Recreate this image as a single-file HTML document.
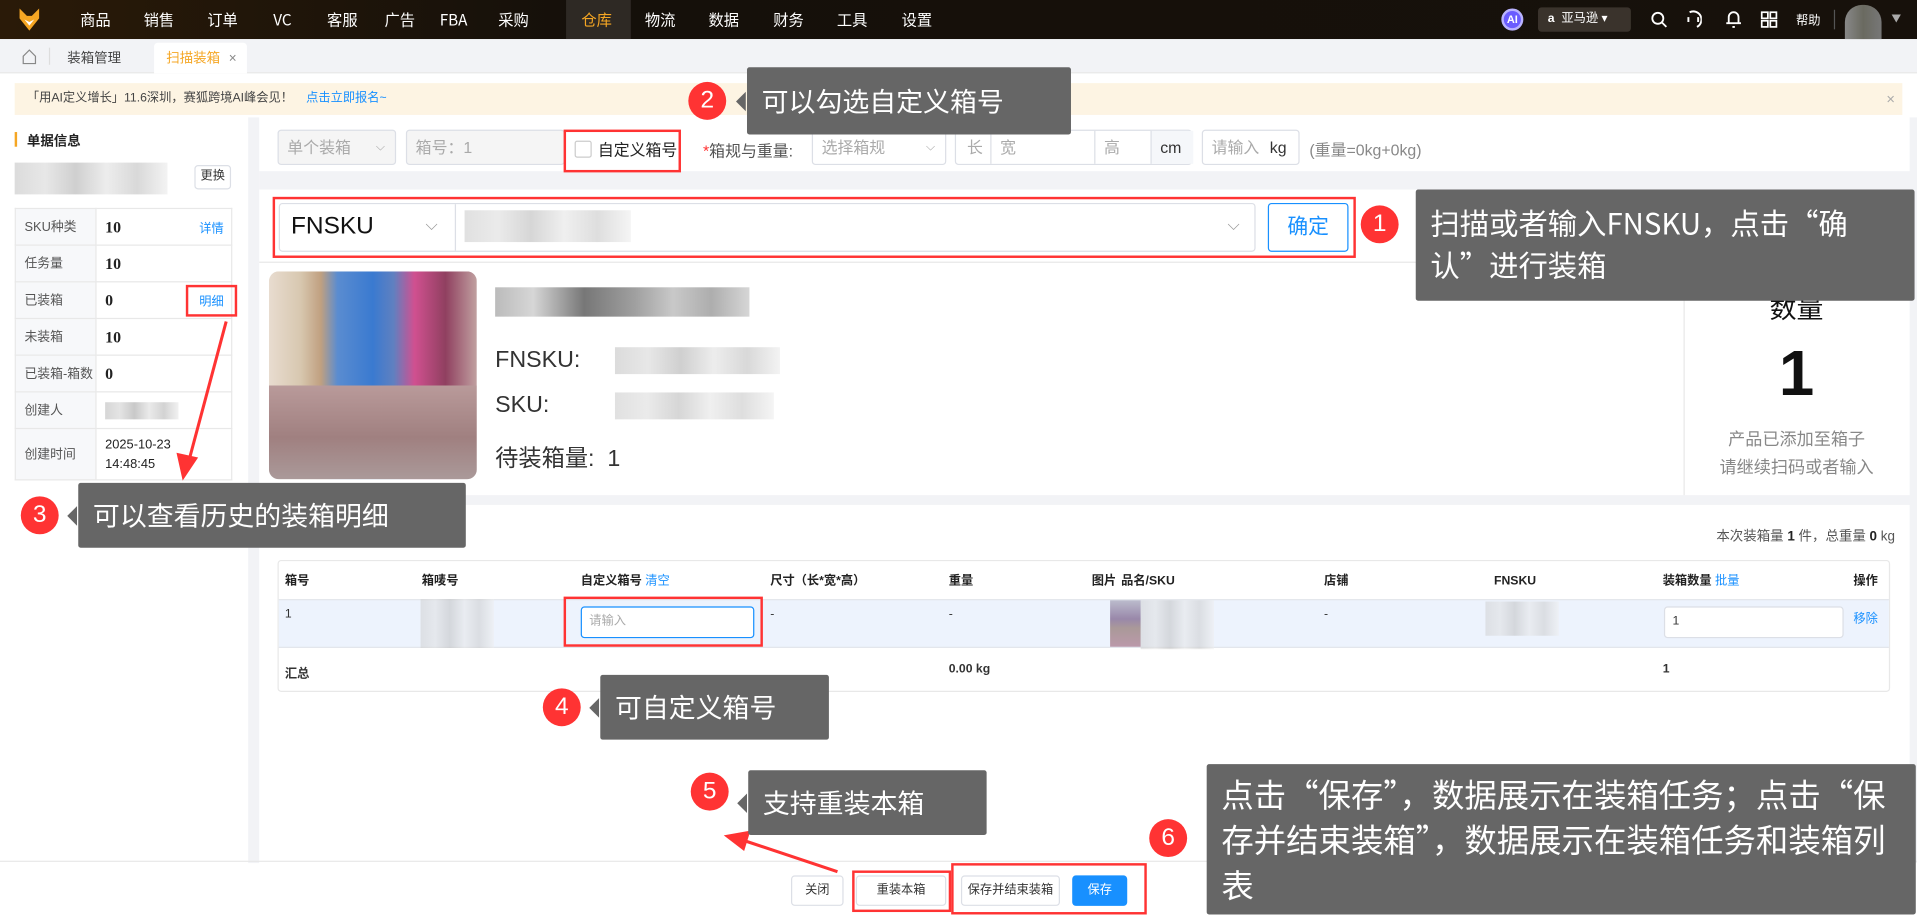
<!DOCTYPE html>
<html><head><meta charset="utf-8">
<style>
*{box-sizing:border-box;margin:0;padding:0}
html,body{width:1917px;height:917px;overflow:hidden;background:#fff}
body{font-family:"Liberation Sans","Noto Sans CJK SC",sans-serif;color:#333}
#w{position:absolute;left:0;top:0;width:1568px;height:750px;transform:scale(1.22258);transform-origin:0 0;background:#fff}
.a{position:absolute}
.nav{left:0;top:0;width:1568px;height:32px;background:linear-gradient(90deg,#2a1a08,#15100a 30%,#17110b 100%)}
.nav span{position:absolute;top:0;line-height:32px;height:32px;color:#fff;font-size:12.5px;transform:translateX(-50%);font-family:"Noto Sans CJK SC",sans-serif}
.tabs{left:0;top:32px;width:1568px;height:28px;background:#f2f3f6;border-bottom:1px solid #e8e8e8}
.box{border:1px solid #dcdfe6;border-radius:3px;background:#fff}
.dis{background:#f5f5f5;color:#aaa}
.red{border:2px solid #f33}
.tip{background:#666;color:#fff;font-size:22px;border-radius:2px;padding:0 12px;line-height:31px;font-family:"Noto Sans CJK SC",sans-serif}
.tip:before{content:"";position:absolute;left:-9px;top:50%;margin-top:-8px;border:8px solid transparent;border-right-color:#666;border-left:0;width:0;height:0}
.num{width:31px;height:31px;border-radius:50%;background:#f33;color:#fff;font-size:20px;text-align:center;line-height:31px}
.blur{background:linear-gradient(90deg,#ccc,#ddd 20%,#bbb 40%,#e5e5e5 60%,#c8c8c8 80%,#eee)}
.lt{table-layout:fixed}
.lt td{border:1px solid #e8e8e8;height:30px;font-size:10.5px;padding:0 0 0 7px;white-space:nowrap;overflow:hidden}
.lt td.l{background:#f7f8fa;color:#555}
.lt td.b{font-weight:bold;font-size:13px;color:#222;font-family:"Liberation Serif",serif}
.th{font-size:10px;font-weight:bold;color:#222;top:468px;line-height:16px}
.btn{position:absolute;border:1px solid #dcdfe6;border-radius:3px;background:#fff;font-size:10px;text-align:center;line-height:23px;height:25px;color:#333}
</style></head><body><div id="w">
<div class="a nav">
 <svg class="a" style="left:14px;top:6px" width="20" height="20" viewBox="0 0 20 20"><path d="M2 1 L8 7 L12 7 L18 1 L18 9 L10 19 L2 9Z" fill="#f5a623"/><path d="M6 10 L10 15 L14 10 L10 12Z" fill="#fff"/></svg>
 <div class="a" style="left:463px;top:0;width:53px;height:32px;background:#2e2924"></div>
 <span style="left:78px">商品</span><span style="left:130px">销售</span><span style="left:182px">订单</span><span style="left:231px">VC</span><span style="left:280px">客服</span><span style="left:327px">广告</span><span style="left:371px">FBA</span><span style="left:420px">采购</span><span style="left:488px;color:#f5a623">仓库</span><span style="left:540px">物流</span><span style="left:592px">数据</span><span style="left:645px">财务</span><span style="left:697px">工具</span><span style="left:750px">设置</span>
 <div class="a" style="left:1228px;top:7px;width:18px;height:18px;border-radius:50%;background:#6a5cff;border:2px solid #b9b3ff;color:#fff;font-size:9px;font-weight:bold;text-align:center;line-height:14px">AI</div>
 <div class="a" style="left:1258px;top:6px;width:76px;height:20px;border-radius:3px;background:#3a332c;color:#fff;font-size:10px;line-height:20px;padding-left:8px"><b>a</b>&nbsp; 亚马逊 ▾</div>
 <svg class="a" style="left:1350px;top:9px" width="14" height="14"><circle cx="6" cy="6" r="4.5" stroke="#fff" stroke-width="1.5" fill="none"/><path d="M9.5 9.5L13 13" stroke="#fff" stroke-width="1.5"/></svg>
 <svg class="a" style="left:1378px;top:8px" width="14" height="16"><path d="M4 2 A6 6 0 0 1 10 14 M3 6 v4 M11 6 v4" stroke="#fff" stroke-width="1.6" fill="none"/></svg>
 <svg class="a" style="left:1411px;top:8px" width="14" height="16"><path d="M3 11 V6 A4 4 0 0 1 11 6 V11 H3Z M1 11 H13 M6 14 H8" stroke="#fff" stroke-width="1.5" fill="none"/></svg>
 <svg class="a" style="left:1440px;top:9px" width="14" height="14"><rect x="1" y="1" width="5" height="5" stroke="#fff" fill="none" stroke-width="1.4"/><rect x="8" y="1" width="5" height="5" stroke="#fff" fill="none" stroke-width="1.4"/><rect x="1" y="8" width="5" height="5" stroke="#fff" fill="none" stroke-width="1.4"/><rect x="8" y="8" width="5" height="5" stroke="#fff" fill="none" stroke-width="1.4"/></svg>
 <span style="left:1479px;font-size:10px">帮助</span>
 <div class="a" style="left:1500px;top:8px;width:1px;height:16px;background:#555"></div>
 <div class="a" style="left:1509px;top:4px;width:30px;height:36px;border-radius:14px 14px 0 0;background:linear-gradient(90deg,#888,#6a6a60 50%,#777)"></div>
 <span style="left:1551px;font-size:8px;color:#aaa">▼</span>
</div>
<div class="a tabs">
 <svg class="a" style="left:18px;top:8px" width="12" height="13"><path d="M1 6 L6 1 L11 6 V12 H1Z" stroke="#888" fill="none"/></svg>
 <div class="a" style="left:40px;top:7px;width:1px;height:14px;background:#ddd"></div>
 <div class="a" style="left:55px;top:7px;font-size:11px;color:#444">装箱管理</div>
 <div class="a" style="left:126px;top:3px;width:76px;height:25px;background:#fff;border-radius:3px 3px 0 0;font-size:11px;color:#f5a623;padding:4px 0 0 10px">扫描装箱 <span style="color:#888;margin-left:4px">×</span></div>
</div>
<div class="a" style="left:12px;top:68px;width:1544px;height:26px;background:#fdf4e3;font-size:10px;line-height:26px;padding-left:10px;color:#444">「用AI定义增长」11.6深圳，赛狐跨境AI峰会见！ <span style="color:#1890ff;margin-left:8px">点击立即报名~</span><span style="position:absolute;right:6px;color:#aaa;font-size:12px">×</span></div>
<div class="a" style="left:203px;top:96px;width:9px;height:610px;background:#f2f3f6"></div>
<div class="a" style="left:212px;top:140px;width:1356px;height:15px;background:#f2f3f6"></div>
<div class="a" style="left:212px;top:405px;width:1356px;height:8px;background:#f2f3f6"></div>
<div class="a" style="left:1562px;top:96px;width:6px;height:610px;background:#f2f3f6"></div>
<!-- left panel -->
<div class="a" style="left:12px;top:108px;width:2px;height:12px;background:#f5a623"></div>
<div class="a" style="left:22px;top:107px;font-size:11px;font-weight:bold;color:#222">单据信息</div>
<div class="a blur" style="left:12px;top:133px;width:125px;height:26px;opacity:.7"></div>
<div class="btn" style="left:159px;top:135px;width:30px;height:20px;line-height:18px">更换</div>
<table class="a lt" style="left:12px;top:170px;width:178px;border-collapse:collapse">
<colgroup><col style="width:66px"><col></colgroup>
<tr><td class="l">SKU种类</td><td class="b">10 <span style="float:right;margin-right:6px;color:#1890ff;font-weight:normal;font-size:10px;font-family:'Noto Sans CJK SC',sans-serif">详情</span></td></tr>
<tr><td class="l">任务量</td><td class="b">10</td></tr>
<tr><td class="l">已装箱</td><td class="b">0 <span style="float:right;margin-right:6px;color:#1890ff;font-weight:normal;font-size:10px;font-family:'Noto Sans CJK SC',sans-serif">明细</span></td></tr>
<tr><td class="l">未装箱</td><td class="b">10</td></tr>
<tr><td class="l">已装箱-箱数</td><td class="b">0</td></tr>
<tr><td class="l">创建人</td><td><div class="blur" style="width:60px;height:14px;opacity:.8"></div></td></tr>
<tr><td class="l" style="height:42px">创建时间</td><td style="font-size:10.5px;color:#222;line-height:16px">2025-10-23<br>14:48:45</td></tr>
</table>
<div class="a red" style="left:152px;top:233px;width:42px;height:26px"></div>
<!-- toolbar -->
<div class="a box dis" style="left:227px;top:106px;width:97px;height:29px;font-size:13px;line-height:27px;padding-left:7px">单个装箱<span style="position:absolute;right:8px;font-size:10px">⌵</span></div>
<div class="a box dis" style="left:332px;top:106px;width:130px;height:29px;font-size:13px;line-height:27px;padding-left:7px">箱号：1</div>
<div class="a" style="left:470px;top:115px;width:14px;height:14px;border:1px solid #ccc;border-radius:2px"></div>
<div class="a" style="left:489px;top:112px;font-size:13px;color:#222">自定义箱号</div>
<div class="a red" style="left:461px;top:106px;width:96px;height:35px"></div>
<div class="a" style="left:575px;top:113px;font-size:13px;color:#555"><span style="color:#f33">*</span>箱规与重量:</div>
<div class="a box" style="left:664px;top:106px;width:110px;height:29px;font-size:13px;line-height:27px;padding-left:7px;color:#aaa">选择箱规<span style="position:absolute;right:8px;font-size:10px">⌵</span></div>
<div class="a box" style="left:781px;top:106px;width:194px;height:29px;font-size:13px;line-height:27px;color:#aaa">
 <span class="a" style="left:9px">长</span><span class="a" style="left:28px;top:0;height:27px;border-left:1px solid #dcdfe6"></span><span class="a" style="left:36px">宽</span><span class="a" style="left:113px;height:27px;border-left:1px solid #dcdfe6"></span><span class="a" style="left:121px">高</span><span class="a" style="left:159px;width:35px;height:27px;background:#f5f7fa;border-left:1px solid #dcdfe6;color:#333;padding-left:7px">cm</span></div>
<div class="a box" style="left:983px;top:106px;width:80px;height:29px;font-size:13px;line-height:27px;padding-left:7px;color:#aaa">请输入 <span style="color:#333;margin-left:5px">kg</span></div>
<div class="a" style="left:1071px;top:112px;font-size:13px;color:#888">(重量=0kg+0kg)</div>
<!-- FNSKU row -->
<div class="a box" style="left:228px;top:166px;width:799px;height:40px"></div>
<div class="a" style="left:372px;top:167px;width:1px;height:38px;background:#dcdfe6"></div>
<div class="a" style="left:238px;top:174px;font-size:20px;color:#111">FNSKU</div>
<div class="a" style="left:348px;top:176px;font-size:13px;color:#999">⌵</div>
<div class="a" style="left:1004px;top:176px;font-size:13px;color:#999">⌵</div>
<div class="a blur" style="left:380px;top:172px;width:136px;height:26px;opacity:.6"></div>
<div class="a" style="left:1037px;top:166px;width:66px;height:40px;border:1px solid #1890ff;border-radius:3px;color:#1890ff;font-size:17px;text-align:center;line-height:38px">确定</div>
<div class="a red" style="left:223px;top:161px;width:886px;height:50px"></div>
<div class="a" style="left:212px;top:214px;width:1350px;height:1px;background:#e8e8e8"></div>
<!-- product -->
<div class="a" style="left:220px;top:222px;width:170px;height:170px;border-radius:8px;background:
linear-gradient(180deg,transparent 0,transparent 55%,#b99a9a 55%,#a08080 80%,#a99 100%),
linear-gradient(90deg,#e8dcd0 0,#d8c8b0 15%,#c0a080 25%,#5a8cd0 33%,#3a7ad0 50%,#6080c0 60%,#d05090 70%,#904060 85%,#c0a0a0 100%)"></div>
<div class="a" style="left:405px;top:235px;width:208px;height:24px;background:linear-gradient(90deg,#aaa,#ccc 15%,#555 35%,#888 55%,#bbb 70%,#999 85%,#ccc);opacity:.8"></div>
<div class="a" style="left:405px;top:284px;font-size:19px;color:#333">FNSKU:</div>
<div class="a blur" style="left:503px;top:284px;width:135px;height:22px;opacity:.7"></div>
<div class="a" style="left:405px;top:321px;font-size:19px;color:#333">SKU:</div>
<div class="a blur" style="left:503px;top:321px;width:130px;height:22px;opacity:.6"></div>
<div class="a" style="left:405px;top:360px;font-size:19px;color:#333">待装箱量:&nbsp; 1</div>
<div class="a" style="left:1377px;top:215px;width:1px;height:190px;background:#e8e8e8"></div>
<div class="a" style="left:1377px;top:235px;width:185px;text-align:center;font-size:22px;color:#111">数量</div>
<div class="a" style="left:1377px;top:276px;width:185px;text-align:center;font-size:52px;font-weight:bold;color:#111">1</div>
<div class="a" style="left:1377px;top:348px;width:185px;text-align:center;font-size:14px;color:#888;line-height:23px">产品已添加至箱子<br>请继续扫码或者输入</div>
<!-- table section -->
<div class="a" style="left:227px;top:430px;width:2px;height:12px;background:#f5a623"></div>
<div class="a" style="left:233px;top:430px;font-size:10px;font-weight:bold;color:#222">装箱信息</div>
<div class="a" style="right:18px;top:430px;font-size:11px;color:#555">本次装箱量 <b style="color:#222">1</b> 件，总重量 <b style="color:#222">0</b> kg</div>
<div class="a" style="left:227px;top:458px;width:1319px;height:108px;border:1px solid #e8e8e8;border-radius:3px"></div>
<div class="a" style="left:228px;top:490px;width:1317px;height:40px;background:#edf3fd;border-top:1px solid #e3e6eb;border-bottom:1px solid #e3e6eb"></div>
<div class="a th" style="left:233px">箱号</div><div class="a th" style="left:345px">箱唛号</div><div class="a th" style="left:475px">自定义箱号 <span style="color:#1890ff;font-weight:normal">清空</span></div><div class="a th" style="left:630px">尺寸（长*宽*高）</div><div class="a th" style="left:776px">重量</div><div class="a th" style="left:893px">图片</div><div class="a th" style="left:917px">品名/SKU</div><div class="a th" style="left:1083px">店铺</div><div class="a th" style="left:1222px">FNSKU</div><div class="a th" style="left:1360px">装箱数量 <span style="color:#1890ff;font-weight:normal">批量</span></div><div class="a th" style="left:1516px">操作</div>
<div class="a" style="left:233px;top:497px;font-size:10px">1</div>
<div class="a blur" style="left:344px;top:490px;width:60px;height:40px;opacity:.5"></div>
<div class="a" style="left:475px;top:496px;width:142px;height:26px;border:1px solid #1890ff;border-radius:3px;background:#fff;font-size:10px;color:#aaa;line-height:24px;padding-left:6px">请输入</div>
<div class="a red" style="left:461px;top:488px;width:163px;height:41px"></div>
<div class="a" style="left:630px;top:497px;font-size:10px">-</div><div class="a" style="left:776px;top:497px;font-size:10px">-</div><div class="a" style="left:1083px;top:497px;font-size:10px">-</div>
<div class="a" style="left:908px;top:491px;width:25px;height:38px;background:linear-gradient(180deg,#bbc 0,#98a 40%,#a99 60%,#b9a 100%)"></div>
<div class="a blur" style="left:933px;top:491px;width:60px;height:40px;opacity:.5"></div>
<div class="a blur" style="left:1215px;top:492px;width:60px;height:28px;opacity:.5"></div>
<div class="a" style="left:1361px;top:496px;width:147px;height:26px;border:1px solid #dcdfe6;border-radius:3px;background:#fff;font-size:10px;line-height:24px;padding-left:6px">1</div>
<div class="a" style="left:1516px;top:497px;font-size:10px;color:#1890ff">移除</div>
<div class="a" style="left:233px;top:542px;font-size:10px;font-weight:bold">汇总</div>
<div class="a" style="left:776px;top:542px;font-size:10px;font-weight:bold">0.00 kg</div>
<div class="a" style="left:1360px;top:542px;font-size:10px;font-weight:bold">1</div>
<!-- bottom bar -->
<div class="a" style="left:0;top:704px;width:1568px;height:1px;background:#e8e8e8"></div>
<div class="btn" style="left:647px;top:716px;width:43px">关闭</div>
<div class="btn" style="left:700px;top:716px;width:74px">重装本箱</div>
<div class="btn" style="left:786px;top:716px;width:81px">保存并结束装箱</div>
<div class="btn" style="left:877px;top:716px;width:45px;background:#1890ff;border-color:#1890ff;color:#fff">保存</div>
<div class="a red" style="left:697px;top:712px;width:81px;height:34px"></div>
<div class="a red" style="left:778px;top:706px;width:160px;height:42px"></div>
<!-- arrows -->
<svg class="a" style="left:0;top:0" width="1568" height="750"><g stroke="#f33" stroke-width="2.5" fill="#f33"><line x1="185" y1="263" x2="155" y2="375"/><path d="M150 390 L146 372 L160 375Z"/><line x1="685" y1="713" x2="610" y2="688"/><path d="M595 684 L612 681 L608 694Z"/></g></svg>
<!-- annotations -->
<div class="a num" style="left:1113px;top:168px">1</div>
<div class="a tip" style="left:1158px;top:155px;width:408px;height:91px;padding-top:10px;font-size:24px;line-height:34px;white-space:nowrap;overflow:hidden">扫描或者输入FNSKU，点击“确<br>认”进行装箱</div>
<div class="a num" style="left:563px;top:67px">2</div>
<div class="a tip" style="left:611px;top:55px;width:265px;height:55px;padding-top:12px">可以勾选自定义箱号</div>
<div class="a num" style="left:17px;top:406px">3</div>
<div class="a tip" style="left:64px;top:395px;width:317px;height:53px;padding-top:11px">可以查看历史的装箱明细</div>
<div class="a num" style="left:444px;top:563px">4</div>
<div class="a tip" style="left:491px;top:552px;width:187px;height:53px;padding-top:11px">可自定义箱号</div>
<div class="a num" style="left:565px;top:632px">5</div>
<div class="a tip" style="left:612px;top:630px;width:195px;height:53px;padding-top:11px">支持重装本箱</div>
<div class="a num" style="left:940px;top:670px">6</div>
<div class="a tip" style="left:987px;top:625px;width:580px;height:123px;padding-top:5px;font-size:26.5px;line-height:37px;white-space:nowrap;overflow:hidden">点击“保存”，数据展示在装箱任务；点击“保<br>存并结束装箱”，数据展示在装箱任务和装箱列<br>表</div>
</div></body></html>
